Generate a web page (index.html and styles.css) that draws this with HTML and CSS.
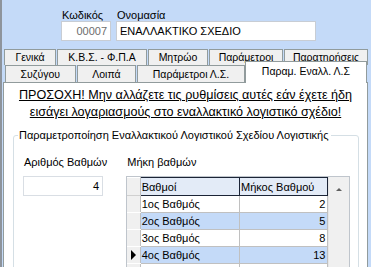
FILE: index.html
```html
<!DOCTYPE html>
<html lang="el">
  <head>
    <meta charset="UTF-8" />
    <title>Λογιστικό σχέδιο</title>
    <link rel="stylesheet" href="styles.css">
  </head>
  <body>
    <div class="window">
      <div class="head">
        <div class="field">
          <label>Κωδικός</label>
          <div class="box code-box">00007</div>
        </div>
        <div class="field">
          <label>Ονομασία</label>
          <div class="box name-box">ΕΝΑΛΛΑΚΤΙΚΟ ΣΧΕΔΙΟ</div>
        </div>
      </div>

      <div class="tabs">
        <div class="tab-row row1">
          <div class="tab t-gen">Γενικά</div>
          <div class="tab t-kbs">Κ.Β.Σ. - Φ.Π.Α</div>
          <div class="tab t-mitr">Μητρώο</div>
          <div class="tab t-par">Παράμετροι</div>
          <div class="tab t-parat">Παρατηρήσεις</div>
        </div>
        <div class="tab-row row2">
          <div class="tab t-syz">Συζύγου</div>
          <div class="tab t-loipa">Λοιπά</div>
          <div class="tab t-parls">Παράμετροι Λ.Σ.</div>
          <div class="tab tab-active t-enal">Παραμ. Εναλλ. Λ.Σ</div>
        </div>
      </div>

      <div class="panel">
        <p class="warn">ΠΡΟΣΟΧΗ! Μην αλλάζετε τις ρυθμίσεις αυτές εάν έχετε ήδη<br>εισάγει λογαριασμούς στο εναλλακτικό λογιστικό σχέδιο!</p>

        <fieldset class="group">
          <legend>Παραμετροποίηση Εναλλακτικού Λογιστικού Σχεδίου Λογιστικής</legend>
          <div class="cols">
            <div class="col-left">
              <label>Αριθμός Βαθμών</label>
              <div class="box num-box">4</div>
            </div>
            <div class="col-right">
              <label>Μήκη βαθμών</label>
              <div class="grid">
                <table class="grid-table">
                  <tr class="grid-head">
                    <td class="rh"></td>
                    <th class="c1">Βαθμοί</th>
                    <th class="c2">Μήκος Βαθμού</th>
                  </tr>
                  <tr>
                    <td class="rh"></td>
                    <td class="c1">1ος Βαθμός</td>
                    <td class="c2">2</td>
                  </tr>
                  <tr class="alt">
                    <td class="rh"></td>
                    <td class="c1">2ος Βαθμός</td>
                    <td class="c2">5</td>
                  </tr>
                  <tr>
                    <td class="rh"></td>
                    <td class="c1">3ος Βαθμός</td>
                    <td class="c2">8</td>
                  </tr>
                  <tr class="alt">
                    <td class="rh current"></td>
                    <td class="c1">4ος Βαθμός</td>
                    <td class="c2">13</td>
                  </tr>
                  <tr>
                    <td class="rh"></td>
                    <td class="c1"></td>
                    <td class="c2"></td>
                  </tr>
                </table>
                <div class="scrollbar">
                  <div class="arrow-up"></div>
                </div>
              </div>
            </div>
          </div>
        </fieldset>
      </div>
    </div>
  </body>
</html>
```

FILE: styles.css
```css
html, body {
  margin: 0;
  height: 100%;
  overflow: hidden;
}
body {
  background-color: #C4DAF8;
  font-family: "Liberation Sans", Arial, sans-serif;
  font-size: 11px;
  color: #000;
}
.window {
  border-left: 2px solid #8E949C;
  height: 100%;
  width: 366px;
}

/* header fields */
.head {
  display: flex;
  gap: 5px;
  padding: 9px 0 0 59px;
}
.field label {
  display: block;
  line-height: 13px;
  padding-left: 1px;
  margin-bottom: -1px;
}
.box {
  background-color: #FFF;
  border: 1px solid #C8CDD4;
  height: 18px;
  line-height: 18px;
  box-sizing: content-box;
  padding: 0 3px;
}
.code-box {
  width: 42px;
  text-align: right;
  color: #6D6D6D;
}
.name-box {
  width: 192px;
}

/* tabs */
.tabs {
  margin-top: 8px;
  font-size: 10.5px;
}
.tab-row {
  display: flex;
  height: 16px;
}
.row1 {
  padding-left: 2px;
}
.row2 {
  padding-left: 3px;
  height: 17px;
}
.tab {
  background-color: #F0F0F0;
  border: 1px solid #919B9C;
  border-bottom: 0;
  text-align: center;
  line-height: 15px;
  box-sizing: border-box;
  margin-right: 1px;
  white-space: nowrap;
}
.row2 .tab {
  line-height: 16px;
}
.t-gen { width: 52px; }
.t-kbs { width: 90px; }
.t-mitr { width: 60px; }
.t-par { width: 74px; }
.t-parat { width: 84px; margin-right: 0; }
.t-syz { width: 71px; }
.t-loipa { width: 60px; }
.t-parls { width: 108px; margin-right: 0; }
.tab-active {
  position: relative;
  background-color: #FFF !important;
  width: 123px;
  height: 22px;
  margin-top: -4px;
  line-height: 18px !important;
  z-index: 1;
}

/* panel */
.panel {
  background-color: #FFF;
  border: 1px solid #919B9C;
  border-bottom: 0;
  margin-left: 1px;
  width: 363px;
  height: 184px;
  overflow: hidden;
}
.warn {
  margin: 4px 0 0 0;
  font-size: 12.6px;
  line-height: 17px;
  text-align: center;
  text-decoration: underline;
}

.group {
  margin: 8px 8px 0 9px;
  padding: 0 0 20px 0;
  border: 1px solid #D5DFE5;
  border-radius: 3px;
}
.group legend {
  margin-left: 4px;
  padding: 0 2px 0 1px;
  line-height: 13px;
}
.cols {
  display: flex;
  gap: 19px;
  padding: 14px 0 0 9px;
}
.col-left label,
.col-right label {
  display: block;
  line-height: 13px;
  padding-left: 1px;
  margin-bottom: 7px;
}
.num-box {
  width: 72px;
  text-align: right;
  border-color: #D9DEE4;
}

/* data grid */
.grid {
  display: flex;
  border: 1px solid #BFC5CC;
  width: 222px;
  background-color: #FFF;
}
.grid-table {
  border-collapse: collapse;
  table-layout: fixed;
}
.grid-table td,
.grid-table th {
  height: 16px;
  padding: 0 2px 0 1px;
  font-weight: normal;
  white-space: nowrap;
  overflow: hidden;
  border-bottom: 1px solid #C0C0C0;
  border-right: 1px solid #C0C0C0;
}
.grid-table .rh {
  width: 13px;
  padding: 0;
  background-color: #F0F0F0;
  border-bottom: 1px solid #FFF;
  border-right: 1px solid #C0C0C0;
  position: relative;
}
.grid-head th {
  height: 17px;
  text-align: left;
  background-color: #E3EBF7;
  border: 1px solid #1B2436;
}
.grid-head .rh {
  border-bottom: 1px solid #D0D0D0;
}
.c1 {
  width: 97px;
}
.c2 {
  width: 85px;
  text-align: right;
}
.grid-head .c2 {
  text-align: left;
}
.alt td.c1,
.alt td.c2 {
  background-color: #C4DAF8;
}
.current::after {
  content: "";
  position: absolute;
  left: 4px;
  top: 3px;
  border-top: 5px solid transparent;
  border-bottom: 5px solid transparent;
  border-left: 5px solid #000;
}
.scrollbar {
  width: 20px;
  background-color: #F0F0F0;
  border-left: 1px solid #E6E6E6;
  position: relative;
}
.arrow-up {
  position: absolute;
  left: 7px;
  top: 11px;
  border-left: 3px solid transparent;
  border-right: 3px solid transparent;
  border-bottom: 3px solid #606060;
}
```
